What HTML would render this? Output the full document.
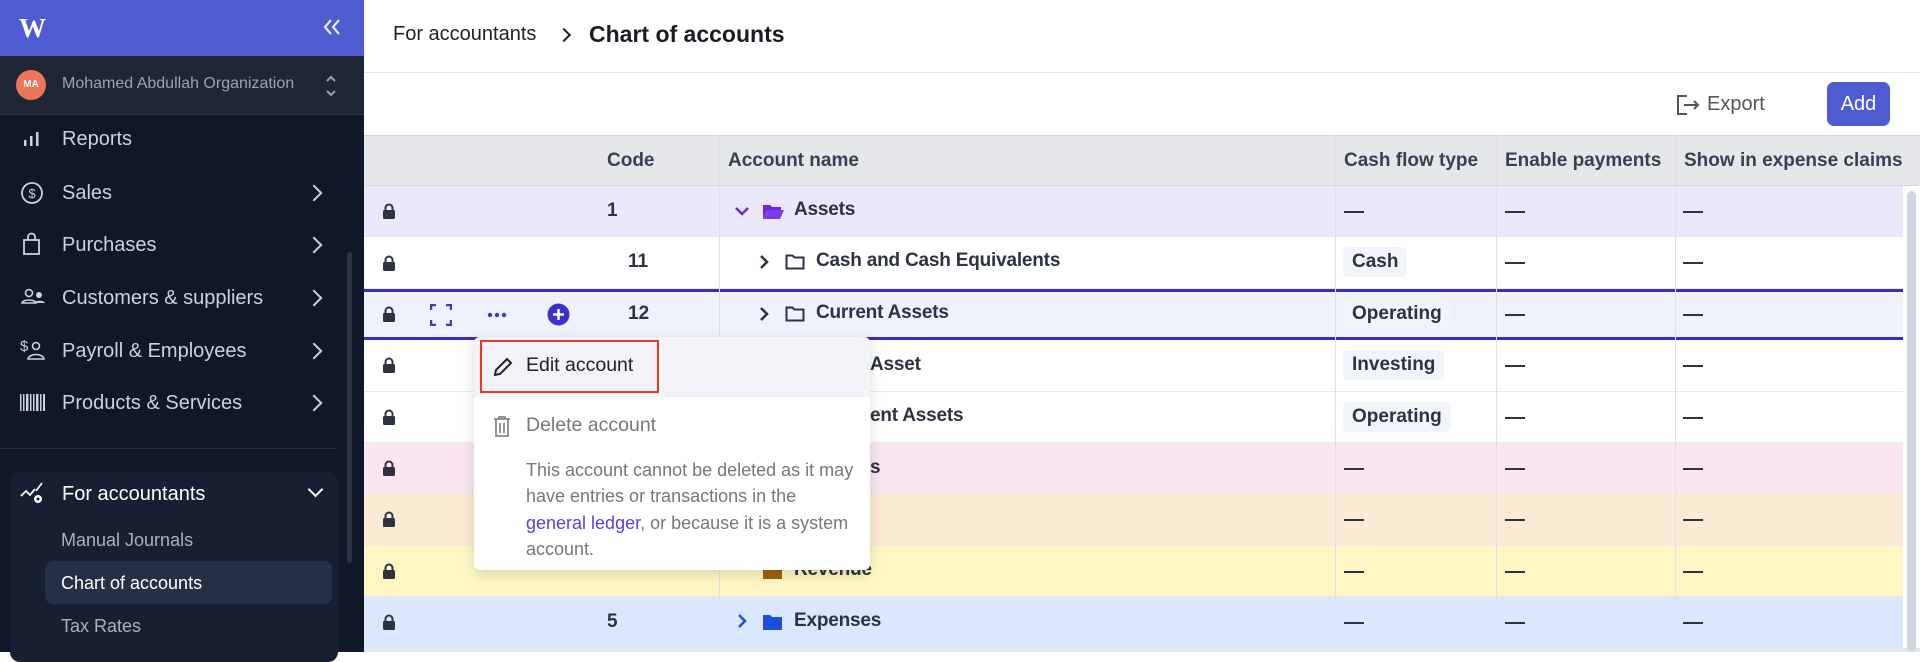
<!DOCTYPE html>
<html><head><meta charset="utf-8"><style>
*{box-sizing:border-box;margin:0;padding:0}
body{width:1920px;height:652px;overflow:hidden;font-family:"Liberation Sans",sans-serif;background:#fff;position:relative}
.a{position:absolute}
.sb{left:0;top:0;width:364px;height:652px;background:#0f1729}
.mi{position:absolute;left:62px;font-size:20px;color:#cbd2dc;line-height:24px}
.chev{position:absolute;left:308px;width:12px;height:12px;border-right:2.5px solid #cbd2dc;border-top:2.5px solid #cbd2dc;transform:rotate(45deg)}
.ic{position:absolute;left:20px}
.row{position:absolute;left:364px;width:1539px;height:51.4px;border-bottom:1px solid #e8eaef}
.lock{position:absolute;left:382px;width:14px;height:16px}
.code{position:absolute;font-size:19px;font-weight:bold;color:#2d3340;line-height:22px}
.nm{position:absolute;font-size:19px;font-weight:bold;color:#2d3340;line-height:22px;letter-spacing:-0.2px}
.dash{position:absolute;width:20px;height:2px;background:#2d3340}
.badge{position:absolute;left:1343px;height:30px;padding:0 9px;background:#f1f5f9;border-radius:5px;font-size:19px;font-weight:bold;color:#2d3340;line-height:30px}
.hd{position:absolute;top:135px;height:51px;font-size:19px;font-weight:bold;color:#374151;line-height:51px}
.vl{position:absolute;width:1px;background:#dfe2ea}
</style></head><body>
<div class="a sb"></div>
<div class="a" style="left:0;top:0;width:364px;height:56px;background:#4f5bd0"></div>
<div class="a" style="left:19px;top:13px;font-size:27px;font-weight:bold;color:#fff;font-family:'Liberation Serif',serif;letter-spacing:-4px">W</div>
<svg class="a" style="left:322px;top:18px" width="20" height="18"><path d="M9 2L3 9l6 7M17 2l-6 7 6 7" fill="none" stroke="#e8eaff" stroke-width="2.2"/></svg>
<div class="a" style="left:0;top:56px;width:364px;height:59px;background:#1e2636;border-bottom:1px solid #2d3648"></div>
<div class="a" style="left:16px;top:70px;width:30px;height:30px;border-radius:50%;background:#f0745a;color:#fff;font-size:10px;font-weight:bold;text-align:center;line-height:30px">MA</div>
<div class="a" style="left:62px;top:75px;font-size:16px;color:#9aa3b2">Mohamed Abdullah Organization</div>
<svg class="a" style="left:324px;top:74px" width="14" height="24"><path d="M3 7l4-4 4 4M3 17l4 4 4-4" fill="none" stroke="#9aa3b2" stroke-width="2"/></svg>
<svg class="ic" style="top:130px" width="22" height="18"><rect x="4" y="10" width="2.5" height="6" fill="#cbd2dc"/><rect x="10" y="6" width="2.5" height="10" fill="#cbd2dc"/><rect x="16" y="2" width="2.5" height="14" fill="#cbd2dc"/></svg>
<div class="mi" style="top:127px">Reports</div>
<svg class="ic" style="top:181px" width="24" height="24"><circle cx="12" cy="12" r="10" fill="none" stroke="#cbd2dc" stroke-width="1.8"/><text x="12" y="17" font-size="13" fill="#cbd2dc" text-anchor="middle" font-family="Liberation Sans">$</text></svg>
<div class="mi" style="top:181px">Sales</div><div class="chev" style="top:187px"></div>
<svg class="ic" style="top:232px" width="24" height="24"><rect x="4" y="8" width="15" height="14" fill="none" stroke="#cbd2dc" stroke-width="1.8"/><path d="M8 8V5a3.5 3.5 0 0 1 7 0v3" fill="none" stroke="#cbd2dc" stroke-width="1.8"/></svg>
<div class="mi" style="top:233px">Purchases</div><div class="chev" style="top:239px"></div>
<svg class="ic" style="top:287px" width="26" height="22"><circle cx="9" cy="6" r="3.5" fill="none" stroke="#cbd2dc" stroke-width="1.6"/><path d="M2 16c1-4 13-4 14 0z" fill="none" stroke="#cbd2dc" stroke-width="1.6"/><circle cx="19" cy="8" r="3" fill="#cbd2dc"/><path d="M14 16c1-3 10-3 11 0z" fill="#cbd2dc"/></svg>
<div class="mi" style="top:286px">Customers &amp; suppliers</div><div class="chev" style="top:292px"></div>
<svg class="ic" style="top:337px" width="26" height="26"><text x="0" y="14" font-size="15" fill="#cbd2dc" font-family="Liberation Sans">$</text><circle cx="16" cy="9" r="3.5" fill="none" stroke="#cbd2dc" stroke-width="1.6"/><path d="M8 22c1-6 15-6 16 0z" fill="none" stroke="#cbd2dc" stroke-width="1.6"/></svg>
<div class="mi" style="top:339px">Payroll &amp; Employees</div><div class="chev" style="top:345px"></div>
<svg class="ic" style="top:392px" width="26" height="22"><g fill="#cbd2dc"><rect x="0" y="2" width="1.5" height="17"/><rect x="3" y="2" width="1.5" height="17"/><rect x="6" y="2" width="2.5" height="17"/><rect x="10" y="2" width="1.5" height="17"/><rect x="13" y="2" width="1.5" height="17"/><rect x="16" y="2" width="2.5" height="17"/><rect x="20" y="2" width="1.5" height="17"/><rect x="23" y="2" width="2" height="17"/></g></svg>
<div class="mi" style="top:391px">Products &amp; Services</div><div class="chev" style="top:397px"></div>
<div class="a" style="left:0;top:448px;width:337px;height:1px;background:#253047"></div>
<div class="a" style="left:347px;top:252px;width:5px;height:311px;border-radius:3px;background:#2a3345"></div>
<div class="a" style="left:10px;top:472px;width:328px;height:190px;border-radius:10px;background:#172033"></div>
<svg class="ic" style="top:482px" width="26" height="24"><path d="M1 14l5-5 4 4 5-6" fill="none" stroke="#fff" stroke-width="1.8"/><path d="M16 9l6-8" stroke="#fff" stroke-width="1.6"/><circle cx="18" cy="17" r="4" fill="#fff"/><circle cx="18" cy="17" r="1.5" fill="#172033"/></svg>
<div class="mi" style="top:482px;color:#fff">For accountants</div>
<div class="a" style="left:310px;top:484px;width:11px;height:11px;border-right:2.5px solid #fff;border-bottom:2.5px solid #fff;transform:rotate(45deg)"></div>
<div class="mi" style="top:528px;left:61px;font-size:18px;color:#a9b1bf">Manual Journals</div>
<div class="a" style="left:45px;top:561px;width:287px;height:43px;border-radius:8px;background:#263045"></div>
<div class="mi" style="top:571px;left:61px;font-size:18px;color:#fff">Chart of accounts</div>
<div class="mi" style="top:614px;left:61px;font-size:18px;color:#a9b1bf">Tax Rates</div>

<div class="a" style="left:393px;top:23px;font-size:20px;color:#222">For accountants</div>
<div class="a" style="left:559px;top:30px;width:10px;height:10px;border-right:2.5px solid #222;border-top:2.5px solid #222;transform:rotate(45deg)"></div>
<div class="a" style="left:589px;top:21px;font-size:23px;font-weight:bold;color:#1a1d24">Chart of accounts</div>
<div class="a" style="left:364px;top:72px;width:1556px;height:1px;background:#e5e7eb"></div>
<svg class="a" style="left:1675px;top:93px" width="26" height="24"><path d="M12 3H3v18h9" fill="none" stroke="#555" stroke-width="2"/><path d="M9 12h14M19 8l4 4-4 4" fill="none" stroke="#555" stroke-width="2"/></svg>
<div class="a" style="left:1707px;top:93px;font-size:20px;color:#555">Export</div>
<div class="a" style="left:1827px;top:82px;width:63px;height:44px;border-radius:7px;background:#4f5bd0;color:#fff;font-size:20px;text-align:center;line-height:44px">Add</div>

<div class="a" style="left:364px;top:135px;width:1556px;height:51px;background:#e5e7eb;border-top:1px solid #d4d7dd;border-bottom:1px solid #d4d7dd"></div>
<div class="hd" style="left:607px">Code</div>
<div class="hd" style="left:728px">Account name</div>
<div class="hd" style="left:1344px">Cash flow type</div>
<div class="hd" style="left:1505px">Enable payments</div>
<div class="hd" style="left:1684px">Show in expense claims</div>

<div class="row" style="top:186px;background:#ebe8fb"></div>
<div class="row" style="top:237.4px;background:#fff"></div>
<div class="row" style="top:288.8px;background:#eef2fd;border-top:3px solid #3b2fb5;border-bottom:3px solid #3b2fb5"></div>
<div class="row" style="top:340.2px;background:#fff"></div>
<div class="row" style="top:391.6px;background:#fff"></div>
<div class="row" style="top:443px;background:#fbe6f1"></div>
<div class="row" style="top:494.4px;background:#fdebd6"></div>
<div class="row" style="top:545.8px;background:#fef7c4"></div>
<div class="row" style="top:597.2px;background:#dbe7fc"></div>
<div class="a" style="left:364px;top:648px;width:1556px;height:4px;background:#e5e7eb"></div>
<div class="vl" style="left:719px;top:135px;height:513px"></div>
<div class="vl" style="left:1335px;top:135px;height:513px"></div>
<div class="vl" style="left:1496px;top:135px;height:513px"></div>
<div class="vl" style="left:1675px;top:135px;height:513px"></div>
<div class="a" style="left:1907px;top:191px;width:9px;height:461px;border-radius:5px;background:#cfd6e0"></div>

<svg width="0" height="0" style="position:absolute"><defs><symbol id="lk" viewBox="0 0 14 16"><path d="M3.5 7V5a3.5 3.5 0 0 1 7 0v2" fill="none" stroke="#2d3340" stroke-width="2"/><rect x="1" y="7" width="12" height="9" rx="1.5" fill="#2d3340"/></symbol></defs></svg>
<svg class="lock" style="top:203px"><use href="#lk"/></svg>
<svg class="lock" style="top:255px"><use href="#lk"/></svg>
<svg class="lock" style="top:306px"><use href="#lk"/></svg>
<svg class="lock" style="top:357px"><use href="#lk"/></svg>
<svg class="lock" style="top:409px"><use href="#lk"/></svg>
<svg class="lock" style="top:460px"><use href="#lk"/></svg>
<svg class="lock" style="top:511px"><use href="#lk"/></svg>
<svg class="lock" style="top:563px"><use href="#lk"/></svg>
<svg class="lock" style="top:614px"><use href="#lk"/></svg>

<svg class="a" style="left:430px;top:304px" width="22" height="22"><path d="M1 6V1h5M16 1h5v5M21 16v5h-5M6 21H1v-5" fill="none" stroke="#3b3fb5" stroke-width="2.5"/></svg>
<svg class="a" style="left:487px;top:312px" width="20" height="6"><circle cx="3" cy="3" r="2.2" fill="#3b3fb5"/><circle cx="10" cy="3" r="2.2" fill="#3b3fb5"/><circle cx="17" cy="3" r="2.2" fill="#3b3fb5"/></svg>
<svg class="a" style="left:547px;top:303px" width="23" height="23"><circle cx="11.5" cy="11.5" r="11" fill="#3b2fcf"/><path d="M11.5 6v11M6 11.5h11" stroke="#fff" stroke-width="2.5"/></svg>

<div class="code" style="left:607px;top:200px">1</div>
<div class="code" style="left:628px;top:251px">11</div>
<div class="code" style="left:628px;top:303px">12</div>
<div class="code" style="left:607px;top:611px">5</div>

<svg class="a" style="left:734px;top:205px" width="16" height="12"><path d="M2 3l6 6 6-6" fill="none" stroke="#6d28d9" stroke-width="2.5"/></svg>
<svg class="a" style="left:762px;top:202px" width="22" height="18"><path d="M1 3h7l2 2h9v3H5l-4 9z" fill="#6d28d9"/><path d="M5 8h17l-4 9H1z" fill="#7c3aed"/></svg>
<div class="nm" style="left:794px;top:199px">Assets</div>
<svg class="a" style="left:758px;top:253px" width="12" height="18"><path d="M3 3l6 6-6 6" fill="none" stroke="#2d3340" stroke-width="2.5"/></svg>
<svg class="a" style="left:785px;top:253px" width="20" height="18"><path d="M1.5 2.5h6l2 2h9v11h-17z" fill="none" stroke="#2d3340" stroke-width="2"/></svg>
<div class="nm" style="left:816px;top:250px">Cash and Cash Equivalents</div>
<svg class="a" style="left:758px;top:305px" width="12" height="18"><path d="M3 3l6 6-6 6" fill="none" stroke="#2d3340" stroke-width="2.5"/></svg>
<svg class="a" style="left:785px;top:305px" width="20" height="18"><path d="M1.5 2.5h6l2 2h9v11h-17z" fill="none" stroke="#2d3340" stroke-width="2"/></svg>
<div class="nm" style="left:816px;top:302px">Current Assets</div>
<div class="nm" style="left:870px;top:354px">Asset</div>
<div class="nm" style="left:870px;top:405px">ent Assets</div>
<div class="nm" style="left:870px;top:457px">s</div>
<div class="nm" style="left:794px;top:559px;color:#2d3340">Revenue</div>
<svg class="a" style="left:762px;top:562px" width="22" height="18"><path d="M1 2h7l2 2h10v13H1z" fill="#a16207"/></svg>
<svg class="a" style="left:736px;top:612px" width="12" height="18"><path d="M3 3l6 6-6 6" fill="none" stroke="#1d4ed8" stroke-width="2.5"/></svg>
<svg class="a" style="left:762px;top:613px" width="22" height="18"><path d="M1 2h7l2 2h10v13H1z" fill="#1d4ed8"/></svg>
<div class="nm" style="left:794px;top:610px">Expenses</div>

<div class="dash" style="left:1344px;top:211px"></div>
<div class="badge" style="top:247px">Cash</div>
<div class="badge" style="top:299px">Operating</div>
<div class="badge" style="top:350px">Investing</div>
<div class="badge" style="top:402px">Operating</div>
<div class="dash" style="left:1344px;top:468px"></div>
<div class="dash" style="left:1344px;top:519px"></div>
<div class="dash" style="left:1344px;top:571px"></div>
<div class="dash" style="left:1344px;top:622px"></div>
<div class="dash" style="left:1505px;top:211px"></div><div class="dash" style="left:1683px;top:211px"></div>
<div class="dash" style="left:1505px;top:262px"></div><div class="dash" style="left:1683px;top:262px"></div>
<div class="dash" style="left:1505px;top:314px"></div><div class="dash" style="left:1683px;top:314px"></div>
<div class="dash" style="left:1505px;top:365px"></div><div class="dash" style="left:1683px;top:365px"></div>
<div class="dash" style="left:1505px;top:417px"></div><div class="dash" style="left:1683px;top:417px"></div>
<div class="dash" style="left:1505px;top:468px"></div><div class="dash" style="left:1683px;top:468px"></div>
<div class="dash" style="left:1505px;top:519px"></div><div class="dash" style="left:1683px;top:519px"></div>
<div class="dash" style="left:1505px;top:571px"></div><div class="dash" style="left:1683px;top:571px"></div>
<div class="dash" style="left:1505px;top:622px"></div><div class="dash" style="left:1683px;top:622px"></div>

<div class="a" style="left:474px;top:337px;width:396px;height:233px;background:#fff;border-radius:6px;box-shadow:0 4px 14px rgba(0,0,0,0.15);overflow:hidden">
  <div style="position:absolute;left:0;top:0;width:396px;height:60px;background:#f1f3f7"></div>
</div>
<div class="a" style="left:480px;top:340px;width:179px;height:53px;border:2.5px solid #e63a26"></div>
<svg class="a" style="left:492px;top:356px" width="22" height="22"><path d="M3 19l1-5L15 3l4 4L8 18z" fill="none" stroke="#222" stroke-width="2"/></svg>
<div class="a" style="left:526px;top:354px;font-size:19.5px;color:#222">Edit account</div>
<svg class="a" style="left:493px;top:416px" width="18" height="22"><path d="M1 3h16M6 3V1h6v2M3 3v17h12V3M7 7v10M11 7v10" fill="none" stroke="#888" stroke-width="1.8"/></svg>
<div class="a" style="left:526px;top:414px;font-size:19.5px;color:#777">Delete account</div>
<div class="a" style="left:526px;top:457px;width:335px;font-size:18px;line-height:26.3px;color:#777">This account cannot be deleted as it may have entries or transactions in the <span style="color:#5b3fd6">general ledger</span>, or because it is a system account.</div>
</body></html>
